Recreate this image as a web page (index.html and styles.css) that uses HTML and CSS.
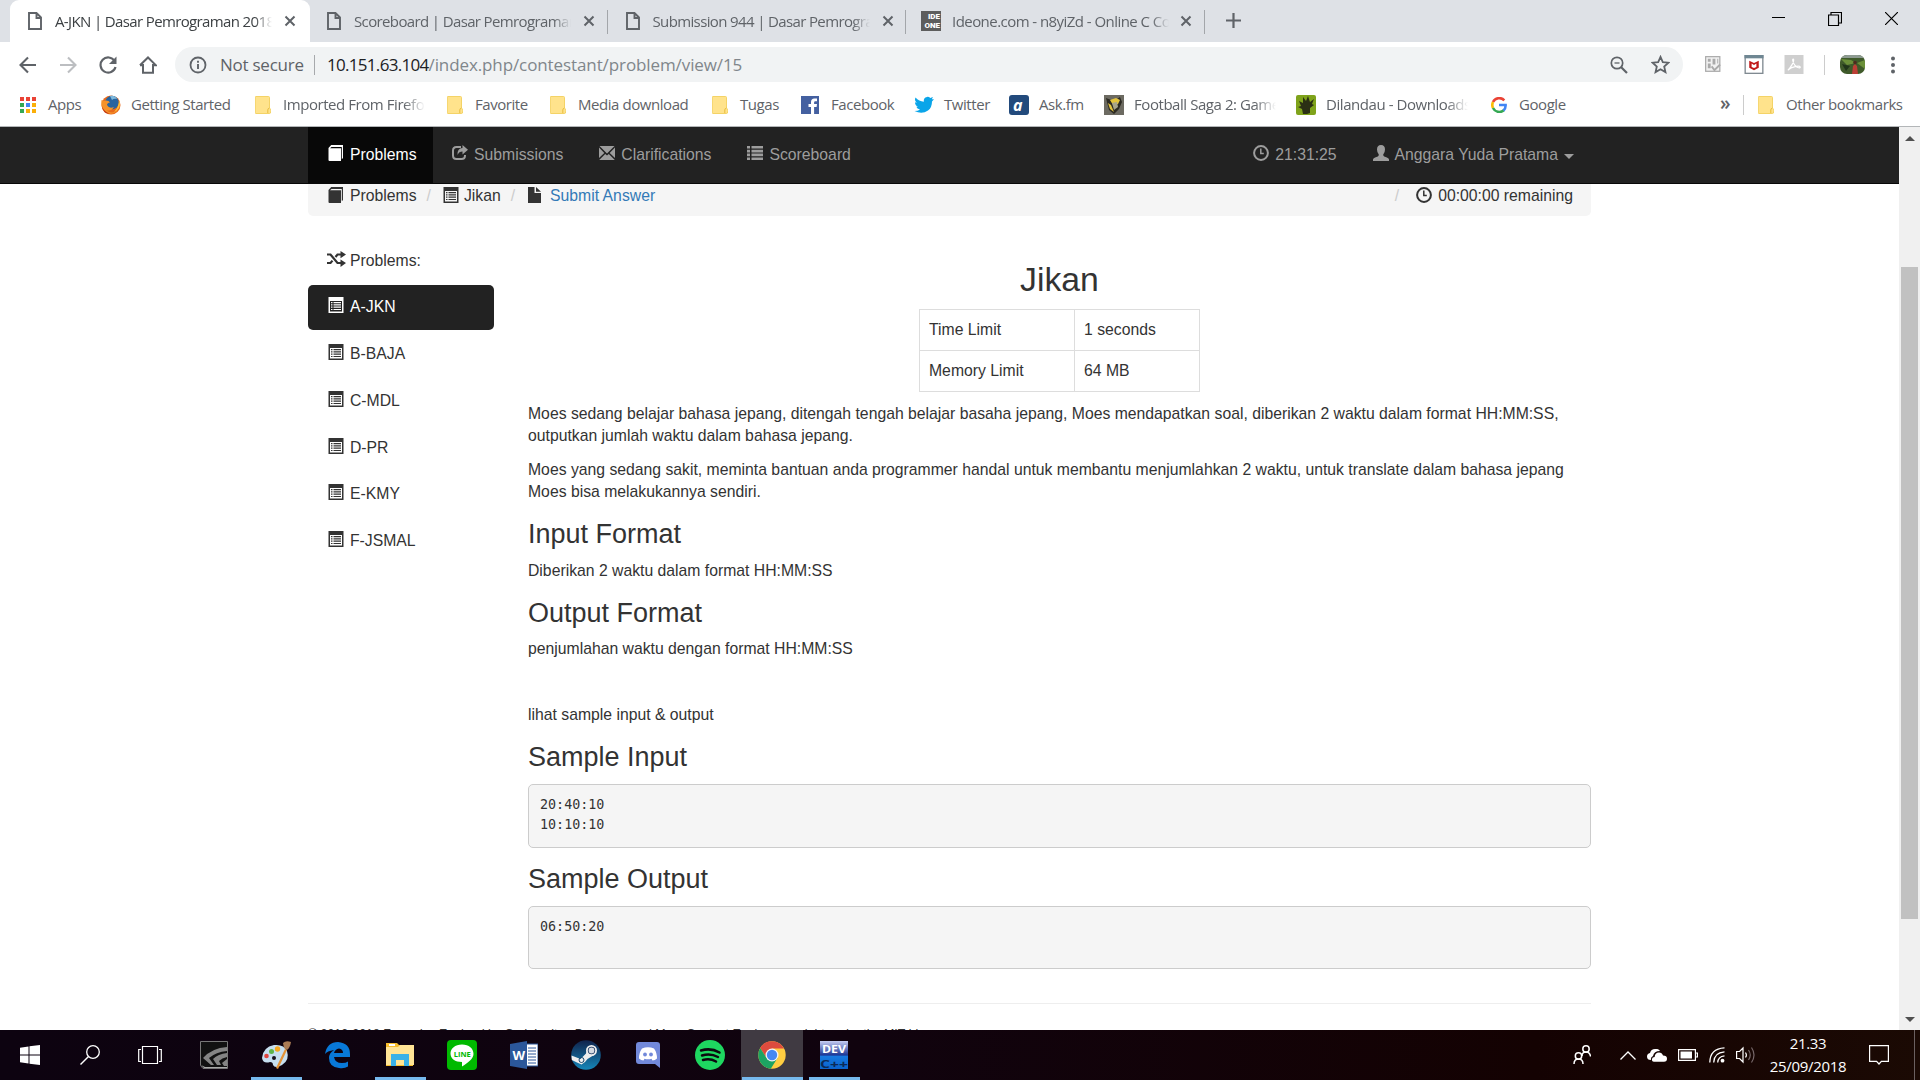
FILE: index.html
```html
<!DOCTYPE html>
<html lang="id">
<head>
<meta charset="utf-8">
<title>A-JKN | Dasar Pemrograman 2018</title>
<link rel="stylesheet" href="styles.css">
</head>
<body>
<svg class="defs" aria-hidden="true">
  <symbol id="page" viewBox="0 0 14 18"><path d="M1 1h7.5L13 5.5V17H1zM8.5 1v5H13" fill="none" stroke="currentColor" stroke-width="1.9"/></symbol>
  <symbol id="x" viewBox="0 0 12 12"><path d="M1.5 1.5l9 9M10.5 1.5l-9 9" stroke="currentColor" stroke-width="2" fill="none"/></symbol>
  <symbol id="folder" viewBox="0 0 16 18"><path d="M1 .5h12.5q1 0 1 1V12q1.200 1 1.200 2.500V16q0 1.500-1.500 1.500H1q-.7 0-.7-.7V1.200Q.3.500 1 .500z" fill="#ffe38c" stroke="#f3cf5b" stroke-width=".9"/><path d="M12.800 17v-3q0-1.500 1.500-2" fill="none" stroke="#e8bd3d"/></symbol>
  <symbol id="book" viewBox="0 0 16 16"><path d="M3.200 0H15v13l-1.200 1.200V2H3.500L2 3.200h11V16H1.500Q.5 16 .5 15V3z" fill="currentColor"/></symbol>
  <symbol id="list-alt" viewBox="0 0 16 16"><path d="M.5 0h15v16H.5zM2 4v10.500h12V4z" fill="currentColor" fill-rule="evenodd"/><path d="M3 5h1.500v1.200H3zM5.500 5H13v1.200H5.500zM3 7.300h1.500v1.200H3zM5.500 7.300H13v1.200H5.500zM3 9.600h1.500v1.200H3zM5.500 9.600H13v1.200H5.500zM3 11.900h1.500v1.200H3zM5.500 11.900H13v1.200H5.500z" fill="currentColor"/></symbol>
  <symbol id="share" viewBox="0 0 16 16"><path d="M9 2H4.500Q1 2 1 5.500v5Q1 14 4.500 14h5q3.500 0 3.500-3.500V10" fill="none" stroke="currentColor" stroke-width="2"/><path d="M10.500 0L16 4.800l-5.500 4.700V6.600Q7 6.600 5.500 10 5 3.400 10.500 3z" fill="currentColor"/></symbol>
  <symbol id="mail" viewBox="0 0 16 14"><path d="M.5 0h15L8 7.500zM0 1.500L5.300 7 0 12zM16 1.500L10.700 7 16 12zM6.200 8L8 9.600 9.800 8l6 6H.2z" fill="currentColor"/></symbol>
  <symbol id="list" viewBox="0 0 16 16"><path d="M0 1h3v2.600H0zM4.500 1H16v2.600H4.500zM0 4.800h3v2.600H0zM4.500 4.800H16v2.600H4.500zM0 8.600h3v2.600H0zM4.500 8.600H16v2.600H4.500zM0 12.400h3V15H0zM4.500 12.400H16V15H4.500z" fill="currentColor"/></symbol>
  <symbol id="clock" viewBox="0 0 16 16"><circle cx="8" cy="8" r="6.900" fill="none" stroke="currentColor" stroke-width="2"/><path d="M7.800 3.500v5h3" fill="none" stroke="currentColor" stroke-width="1.500"/></symbol>
  <symbol id="user" viewBox="0 0 16 16"><path d="M8 0q4 0 4 4.500 0 3-1.800 5 0 1.500 1 2Q16 13 16 14.500V16H0v-1.500Q0 13 4.800 11.500q1-.5 1-2Q4 7.500 4 4.500 4 0 8 0z" fill="currentColor"/></symbol>
  <symbol id="file" viewBox="0 0 13 16"><path d="M0 0h6.500v6H13v10H0zM8 0l5 4.700H8z" fill="currentColor"/></symbol>
  <symbol id="random" viewBox="0 0 19 16"><path d="M0 3.500h3.500l7 8.500H14M0 12h3.500l2-2.400M8.500 6l2-2.500H14" fill="none" stroke="currentColor" stroke-width="2.200"/><path d="M13.500 0L19 3.500l-5.500 3.700zM13.500 8.500L19 12l-5.500 4z" fill="currentColor"/></symbol>
</svg>

<header class="chrome">
  <div class="tabs">
    <div class="tab active"><svg class="pg"><use href="#page"/></svg><span class="t">A-JKN | Dasar Pemrograman 2018</span><svg class="cl"><use href="#x"/></svg></div>
    <div class="tab"><svg class="pg"><use href="#page"/></svg><span class="t">Scoreboard | Dasar Pemrograman</span><svg class="cl"><use href="#x"/></svg></div>
    <div class="tab"><svg class="pg"><use href="#page"/></svg><span class="t">Submission 944 | Dasar Pemrograman</span><svg class="cl"><use href="#x"/></svg></div>
    <div class="tab ide"><span class="ideicon"><b>IDE</b><b>ONE</b></span><span class="t">Ideone.com - n8yiZd - Online C Compiler</span><svg class="cl"><use href="#x"/></svg></div>
    <svg class="plus" viewBox="0 0 15 15"><path d="M7.500 0v15M0 7.500h15" stroke="#5f6368" stroke-width="2.200"/></svg>
    <div class="wins">
      <svg width="13" height="13" viewBox="0 0 13 13"><path d="M0 5.500h13" stroke="#000"/></svg>
      <svg width="14" height="14" viewBox="0 0 14 14"><path d="M.5 3h10v10.500H.5zM3 3V.5h10.500v10.500H11" stroke="#000" fill="none" stroke-width="1.200"/></svg>
      <svg width="13" height="13" viewBox="0 0 13 13"><path d="M0 0l13 13M13 0L0 13" stroke="#000" stroke-width="1.200"/></svg>
    </div>
  </div>

  <div class="toolbar">
    <svg class="nav n1" viewBox="0 0 18 18"><path d="M17 9H2M9 1.500L1.500 9 9 16.500" fill="none" stroke="#5f6368" stroke-width="2.100"/></svg>
    <svg class="nav n2" viewBox="0 0 18 18"><path d="M1 9h15M9 1.500L16.500 9 9 16.500" fill="none" stroke="#bcbec1" stroke-width="2.100"/></svg>
    <svg class="nav n3" viewBox="0 0 18 18"><path d="M15.600 5A7.600 7.600 0 1 0 16.500 11" fill="none" stroke="#5f6368" stroke-width="2.200"/><path d="M17.500.5V8H10z" fill="#5f6368"/></svg>
    <svg class="nav n4" viewBox="0 0 18 18"><path d="M4 8v8.800h10V8M1 9.300L9 1.500l8 7.800H14.500M1 9.300h2.500" fill="none" stroke="#5f6368" stroke-width="2"/></svg>
    <div class="omni">
      <svg class="info" viewBox="0 0 18 18"><circle cx="9" cy="9" r="7.500" fill="none" stroke="#5f6368" stroke-width="1.800"/><path d="M9 8v5M9 4.800v1.900" stroke="#5f6368" stroke-width="1.900"/></svg>
      <span class="ns">Not secure</span><i class="bar"></i>
      <span class="url"><b>10.151.63.104</b>/index.php/contestant/problem/view/15</span>
      <svg class="mag" viewBox="0 0 18 18"><circle cx="7" cy="7" r="5.700" fill="none" stroke="#5f6368" stroke-width="1.700"/><path d="M11 11l6 6" stroke="#5f6368" stroke-width="2.200"/><path d="M4.500 7h5" stroke="#5f6368" stroke-width="1.300"/></svg>
      <svg class="star" viewBox="0 0 18 18"><path d="M9 1.800l2.200 4.900 5.300.6-4 3.600 1.200 5.300L9 13.500l-4.700 2.700 1.200-5.300-4-3.600 5.300-.6z" fill="none" stroke="#5f6368" stroke-width="1.700"/></svg>
    </div>
    <svg class="ext e1" viewBox="0 0 18 18"><rect x=".7" y=".7" width="15" height="15.500" fill="#f1f1f1" stroke="#aaa" stroke-width="1.300"/><path d="M3 3h3v3H3zM3 8h3v5H3zM8 3h3v6H8zM13 3h1v5h-1z" fill="#aaa"/><path d="M7 11l3 4 6-6" fill="none" stroke="#aaa" stroke-width="2"/></svg>
    <svg class="ext e2" viewBox="0 0 20 20"><rect x=".7" y=".7" width="18.600" height="18.600" fill="#fff" stroke="#808a91" stroke-width="1.400"/><path d="M0 0h20v3.500H0z" fill="#6f8793"/><path d="M5 6l5 2.500L15 6v7.500L10 16l-5-2.500zM7.500 9v3.500l2.500 1.300 2.500-1.300V9L10 10.500z" fill="#c01818" fill-rule="evenodd"/></svg>
    <svg class="ext e3" viewBox="0 0 20 20"><path d="M0 0h20v20H0z" fill="#cfcfcf"/><path d="M3.500 16C6 14 10.500 7 9.500 4.500 8 3 8.500 8 11 11s6 3 5.500 1.500S7 12 4 15.500" fill="none" stroke="#fff" stroke-width="1.300"/></svg>
    <i class="bar2"></i>
    <svg class="ava" viewBox="0 0 25 19"><defs><clipPath id="av"><rect width="25" height="19" rx="7"/></clipPath></defs><g clip-path="url(#av)"><path d="M0 0h25v19H0z" fill="#3f5a2a"/><path d="M0 0h25v3H0z" fill="#8e9b92"/><path d="M1 4l10 1 5 3-9 2zM17 8l8-3v9z" fill="#6b9039"/><path d="M2 9l8 2-4 5z" fill="#20351a"/><path d="M12 19l1-8 2-2 2 2 1 8z" fill="#bc3f36"/><circle cx="15" cy="7.500" r="1.800" fill="#4c2d20"/></g></svg>
    <svg class="dots" viewBox="0 0 4 18"><g fill="#5f6368"><circle cx="2" cy="2.500" r="2"/><circle cx="2" cy="9" r="2"/><circle cx="2" cy="15.500" r="2"/></g></svg>
  </div>

  <div class="marks">
    <a class="m" style="width:81px"><svg viewBox="0 0 16 16" class="apps"><path d="M0 0h4v4H0zM6 0h4v4H6zM12 0h4v4h-4z" fill="#ea4335"/><path d="M0 6h4v4H0zM0 12h4v4H0z" fill="#34a853"/><path d="M6 6h4v4H6z" fill="#4285f4"/><path d="M12 6h4v4h-4zM6 12h4v4H6zM12 12h4v4h-4z" fill="#fbaf08"/></svg><span>Apps</span></a>
    <a class="m w" style="width:154px"><svg viewBox="0 0 20 20"><circle cx="10" cy="10" r="9.500" fill="#e8691b"/><circle cx="11" cy="7.500" r="6.800" fill="#27649f"/><path d="M9 1q5-1 7 3-3-1-5 1z" fill="#7db8dc"/><path d="M.6 5Q3 6 5 5.500q3 0 4 2-3 .5-3 2.500 2 4 7 2-3 5-8 3 6 5 12 0Q12 21 5 17.500-1 13 .6 5z" fill="#f5932a"/><path d="M18 5q2 4 0 8-2 3-5 4 5-5 5-12z" fill="#fbc13a"/><path d="M1 11q2 6 8 7.500-7 1-8-7.500z" fill="#c23a16"/></svg><span>Getting Started</span></a>
    <a class="m" style="width:192px"><svg><use href="#folder"/></svg><span class="fade">Imported From Firefox</span></a>
    <a class="m" style="width:103px"><svg><use href="#folder"/></svg><span>Favorite</span></a>
    <a class="m" style="width:162px"><svg><use href="#folder"/></svg><span>Media download</span></a>
    <a class="m" style="width:89px"><svg><use href="#folder"/></svg><span>Tugas</span></a>
    <a class="m w" style="width:113px"><svg viewBox="0 0 20 20"><path d="M0 1h18v18H0z" fill="#4460a0"/><path d="M10 19v-7H7.500V9H10V7q0-3.500 3.500-3.500H16v2.800h-1.700q-1.200 0-1.200 1.200V9H16l-.4 3h-2.500v7z" fill="#fff"/></svg><span>Facebook</span></a>
    <a class="m w" style="width:95px"><svg viewBox="0 0 20 20"><path d="M20 4.200l-2 2.200q0 6-4 9.200-6 4.200-13.500.5 3.500 0 5.500-1.600-3-.5-3.700-2.800h1.700Q1 10.500 1 7.300l1.800.5Q0 5.400 1.500 2.500q3.500 4 8.300 4.200Q9.300 2.500 13 1.900q2-.2 3.300 1.100L19 2l-1.200 2.300z" fill="#0aa5e9"/></svg><span>Twitter</span></a>
    <a class="m w" style="width:95px"><svg viewBox="0 0 20 20"><rect width="20" height="20" rx="3" fill="#224a7c"/><text x="4" y="16" class="ask">a</text></svg><span>Ask.fm</span></a>
    <a class="m w" style="width:192px"><svg viewBox="0 0 20 20"><path d="M0 0h20v20H0z" fill="#6c6a61"/><path d="M2 3l8 3 6-4 2 5-3 7-5 5-5-4z" fill="#2c2a22"/><path d="M6 5l6-2 4 2-2 4-5 1zM4 8l2 6 4 3-3-7z" fill="#e4c43c"/><path d="M8 8l5-1 1 5-4 3z" fill="#a8a48a"/></svg><span class="fade">Football Saga 2: Game</span></a>
    <a class="m w" style="width:195px"><svg viewBox="0 0 20 20"><rect width="20" height="20" rx="2" fill="#7fa31b"/><path d="M3 6l4 2V2l3 4 2-5 2 6 4-3-2 5 2 1-4 3v5l-3 1H7l-1-5-4-2 3-1z" fill="#2b3014"/></svg><span class="fade">Dilandau - Downloads</span></a>
    <a class="m" style="width:229px"><svg viewBox="0 0 16 16" class="apps"><path d="M13.300 3.300A7 7 0 0 0 2 5" fill="none" stroke="#ea4335" stroke-width="2.600"/><path d="M2 5a7 7 0 0 0 0 6" fill="none" stroke="#fbbc05" stroke-width="2.600"/><path d="M2 11a7 7 0 0 0 10.800 2.300" fill="none" stroke="#34a853" stroke-width="2.600"/><path d="M12.500 13.500A7 7 0 0 0 14.600 8H8" fill="none" stroke="#4285f4" stroke-width="2.600"/></svg><span>Google</span></a>
    <span class="more">»</span><i class="bar3"></i>
    <a class="m"><svg><use href="#folder"/></svg><span>Other bookmarks</span></a>
  </div>
</header>

<main class="view">
  <div class="site">
    <nav class="navbar">
      <div class="box">
        <a class="on"><svg><use href="#book"/></svg>Problems</a>
        <a><svg><use href="#share"/></svg>Submissions</a>
        <a><svg><use href="#mail"/></svg>Clarifications</a>
        <a><svg><use href="#list"/></svg>Scoreboard</a>
        <a class="right"><svg><use href="#clock"/></svg>21:31:25</a>
        <a class="user"><svg><use href="#user"/></svg>Anggara Yuda Pratama<i class="caret"></i></a>
      </div>
    </nav>
    <div class="box crumbs">
      <span class="c1"><svg><use href="#book"/></svg>Problems</span><i>/</i>
      <span class="c2"><svg><use href="#list-alt"/></svg>Jikan</span><i>/</i>
      <a class="c3"><svg><use href="#file"/></svg>Submit Answer</a>
      <i class="right">/</i><span class="c4"><svg><use href="#clock"/></svg>00:00:00 remaining</span>
    </div>
    <div class="box cols">
      <ul class="side">
        <li class="head"><svg><use href="#random"/></svg>Problems:</li>
        <li class="sel"><svg><use href="#list-alt"/></svg>A-JKN</li>
        <li><svg><use href="#list-alt"/></svg>B-BAJA</li>
        <li><svg><use href="#list-alt"/></svg>C-MDL</li>
        <li><svg><use href="#list-alt"/></svg>D-PR</li>
        <li><svg><use href="#list-alt"/></svg>E-KMY</li>
        <li><svg><use href="#list-alt"/></svg>F-JSMAL</li>
      </ul>
      <article>
        <h2>Jikan</h2>
        <table><tr><td class="k">Time Limit</td><td>1 seconds</td></tr><tr><td class="k">Memory Limit</td><td>64 MB</td></tr></table>
        <p>Moes sedang belajar bahasa jepang, ditengah tengah belajar basaha jepang, Moes mendapatkan soal, diberikan 2 waktu dalam format HH:MM:SS,<br>outputkan jumlah waktu dalam bahasa jepang.</p>
        <p>Moes yang sedang sakit, meminta bantuan anda programmer handal untuk membantu menjumlahkan 2 waktu, untuk translate dalam bahasa jepang<br>Moes bisa melakukannya sendiri.</p>
        <h3>Input Format</h3>
        <p>Diberikan 2 waktu dalam format HH:MM:SS</p>
        <h3 class="out">Output Format</h3>
        <p>penjumlahan waktu dengan format HH:MM:SS</p>
        <p class="blank">&nbsp;</p>
        <p>lihat sample input &amp; output</p>
        <h3>Sample Input</h3>
        <pre>20:40:10
10:10:10</pre>
        <h3>Sample Output</h3>
        <pre>06:50:20</pre>
      </article>
    </div>
    <footer class="box">© 2013-2018 Forendev Engined by CodeIgniter, Bootstrap and MonoContest Engine copyright under the MIT License</footer>
  </div>
  <div class="scroll"><i class="up"></i><i class="thumb"></i><i class="down"></i></div>
</main>

<div class="task">
  <div class="k0"><svg width="20" height="20" viewBox="0 0 20 20"><path d="M0 2.700L8.500 1.500V9.500H0zM9.500 1.300L20 0v9.500H9.500zM0 10.500h8.500v8L0 17.300zM9.500 10.500H20V20L9.500 18.700z" fill="#fff"/></svg></div>
  <div class="k0"><svg width="20" height="20" viewBox="0 0 20 20"><circle cx="13" cy="7" r="6.300" fill="none" stroke="#fff" stroke-width="1.300"/><path d="M8.500 11.500L.5 19.500" stroke="#fff" stroke-width="1.400"/></svg></div>
  <div class="k0"><svg width="24" height="20" viewBox="0 0 24 20"><path d="M4.500 1.500h15v17h-15zM3 4.500H.7v12H3M21 4.500h2.300v12H21" fill="none" stroke="#fff" stroke-width="1.200"/></svg></div>
  <div class="k1"><svg width="28" height="28" viewBox="0 0 28 28"><path d="M.5.5h27v27H3l-2.500-3z" fill="#111" stroke="#777"/><path d="M1 24l3 3h23v-1H5z" fill="#aaa"/><path d="M3 17Q12 7 27 6v4Q16 11 9 17l5 7h-3zM13 18q5-5 14-6v4q-5 1-8 4l2 4h-4zM22 22l5-4v7h-3z" fill="#848484"/></svg></div>
  <div class="k1 run"><svg width="30" height="28" viewBox="0 0 30 28"><path d="M1 17Q2 6 13 4q10-1 13 6 3 9-5 14-7 4-9 0 0-3-3-3-7 2-8-4z" fill="#c7dff0"/><circle cx="5.500" cy="15" r="2.300" fill="#e0463e"/><circle cx="10.500" cy="10.500" r="2.500" fill="#5fb54a"/><circle cx="16.500" cy="8" r="2.700" fill="#f6a821"/><circle cx="13" cy="17" r="2" fill="#17101c"/><path d="M24 8l2 1-9 19-2-1z" fill="#e39236"/><path d="M22 2q3-3 8-1-1 6-4 8l-3-2z" fill="#ab7c55"/></svg></div>
  <div class="k1"><svg width="26" height="28" viewBox="0 0 26 28"><path d="M0 13Q2 1 13 1q12 1 12 12v3H9q1 6 8 6 4 0 6-1.500v5Q19 28 14 27 4 26 4 17q0-5 5-8-7 1-9 4zM9 12h9q0-4-4-4.500Q10 8 9 12z" fill="#0879d8"/></svg></div>
  <div class="k1 run"><svg width="28" height="26" viewBox="0 0 28 26"><path d="M0 1h11l2 2h14v21H0z" fill="#f7bd2c"/><path d="M0 5h12l2-2h14v20H0z" fill="#ffe495"/><path d="M3 2h6v2H3z" fill="#fff"/><path d="M5 24V12h18v12h-5v-6h-8v6z" fill="#39b1e8"/></svg></div>
  <div class="k1"><svg width="30" height="30" viewBox="0 0 30 30"><rect width="30" height="30" rx="4" fill="#00b900"/><path d="M15 4.500c7 0 11.500 4 11.500 9.500 0 5-6 9-11.500 12.500V22C8 22 3.500 18.500 3.500 13.500S8 4.500 15 4.500z" fill="#fff"/><text x="6.800" y="16.500" class="line">LINE</text></svg></div>
  <div class="k1"><svg width="28" height="28" viewBox="0 0 28 28"><path d="M16 3h12v22H16z" fill="#fff" stroke="#2b579a"/><path d="M18 7h8M18 10h8M18 13h8M18 16h8M18 19h8M18 22h8" stroke="#2b579a"/><path d="M0 3l17-3v28L0 25z" fill="#2b579a"/><text x="2.500" y="18.500" class="word">W</text></svg></div>
  <div class="k1"><svg width="30" height="30" viewBox="0 0 30 30"><defs><linearGradient id="sg" x2="0" y2="1"><stop offset="0" stop-color="#10224b"/><stop offset="1" stop-color="#1687b9"/></linearGradient></defs><circle cx="15" cy="15" r="14.800" fill="url(#sg)"/><path d="M.5 15.500l9 3.500 5.500-5.500 1-3.500 7 5-6.500 4-2.500 3-3.500 2.500-4.500-2L.8 20z" fill="#eee"/><circle cx="20.500" cy="10.500" r="4.600" fill="#17335d" stroke="#eee" stroke-width="1.800"/><circle cx="20.500" cy="10.500" r="2.900" fill="#d6dbe2"/><circle cx="10.500" cy="20" r="2.500" fill="none" stroke="#17476d"/></svg></div>
  <div class="k1"><svg width="24" height="26" viewBox="0 0 24 26"><path d="M3 0h18q3 0 3 3v23l-5-4H3q-3 0-3-3V3q0-3 3-3z" fill="#7289da"/><path d="M6 6.500q6-2.500 12 0 3 4 3 10-2 2-4.500 2l-1-1.700q-3.500 1-7 0l-1 1.700Q5 18.500 3 16.500q0-6 3-10z" fill="#fff"/><circle cx="9" cy="12.500" r="1.900" fill="#7289da"/><circle cx="15" cy="12.500" r="1.900" fill="#7289da"/></svg></div>
  <div class="k1"><svg width="30" height="30" viewBox="0 0 30 30"><circle cx="15" cy="15" r="15" fill="#1ed760"/><path d="M6 10.500q10-3 18.500 2M7 15.500q8.500-2.500 16 1.500M8 20q7-2 13 1.500" fill="none" stroke="#0c0910" stroke-width="2.500" stroke-linecap="round"/></svg></div>
  <div class="k1 cur"><svg width="28" height="28" viewBox="0 0 28 28"><circle cx="14" cy="14" r="13.700" fill="#ffcd41"/><path d="M2.200 7A13.700 13.700 0 0 1 26 7.500H14L8.500 17z" fill="#dd4b3e"/><path d="M2.200 7A13.700 13.700 0 0 0 12.800 27.700L19.500 17 8.500 17z" fill="#1da362"/><circle cx="14" cy="14" r="6.500" fill="#f4f4f4"/><circle cx="14" cy="14" r="5.200" fill="#4688f1"/></svg></div>
  <div class="k1 run"><svg width="28" height="28" viewBox="0 0 28 28"><defs><linearGradient id="dg" x2="0" y2="1"><stop offset="0" stop-color="#c6cdf2"/><stop offset=".5" stop-color="#1c3795"/><stop offset=".55" stop-color="#1679e0"/><stop offset="1" stop-color="#0b63cc"/></linearGradient></defs><path d="M0 0h28v28H0z" fill="url(#dg)"/><text x="2" y="11.500" class="dev" textLength="24" lengthAdjust="spacingAndGlyphs">DEV</text><text x="0" y="26.500" class="cpp" textLength="28" lengthAdjust="spacingAndGlyphs">C++</text></svg></div>
  <div class="tray">
    <svg width="18" height="20" viewBox="0 0 18 20"><g fill="none" stroke="#fff" stroke-width="1.500"><circle cx="13" cy="4" r="3.200"/><circle cx="5.500" cy="11" r="3.200"/><path d="M9 11q0-4 4-4 4 0 4.500 4.500M1 19q0-5 4.500-5t4.500 5"/></g></svg>
    <svg width="16" height="9" viewBox="0 0 16 9"><path d="M.5 8.500L8 1l7.500 7.500" fill="none" stroke="#fff" stroke-width="1.300"/></svg>
    <svg width="20" height="13" viewBox="0 0 20 13"><path d="M4 11Q0 11 0 7.500 0 4.500 3 4 4 0 8 0q4-.5 5 2-6 0-7 5-2.500 1-2 4z" fill="#fff"/><path d="M7 12.700Q4.500 12.500 5 10q.3-2 2.600-2Q8 3.500 12 3.500q3 0 4 3 4 0 4 3.200 0 3-3 3z" fill="#fff"/></svg>
    <svg width="20" height="12" viewBox="0 0 20 12"><path d="M.6.6h16.800v10.800H.6zM18 4h1.400v4H18" fill="none" stroke="#fff" stroke-width="1.200"/><path d="M2.500 2.500h11.500v7H2.500z" fill="#fff"/></svg>
    <svg width="16" height="16" viewBox="0 0 16 16"><g fill="none" stroke="#fff" stroke-width="1.300"><path d="M.8 15.500Q1 1.500 15.500.8M4.700 15.500Q5 5.500 15.500 4.800M8.700 15.500Q9 9.500 15.500 8.800"/></g><circle cx="13.500" cy="13.700" r="1.900" fill="#fff"/></svg>
    <svg width="20" height="18" viewBox="0 0 20 18"><path d="M.6 5.500h3L7 2v14l-3.400-3.500h-3z" fill="none" stroke="#fff" stroke-width="1.200"/><path d="M9.500 6.500q1.800 2.500 0 5" fill="none" stroke="#fff" stroke-width="1.200"/><path d="M12.500 4q3.500 5 0 10M15.500 1.500q5 7.500 0 15" fill="none" stroke="#77686a" stroke-width="1.200"/></svg>
  </div>
  <div class="time"><span>21.33</span><span>25/09/2018</span></div>
  <svg class="note" width="20" height="20" viewBox="0 0 20 20"><path d="M.6.6h18.800v15.800h-7L10 19l-2.400-2.600h-7z" fill="none" stroke="#fff" stroke-width="1.200"/></svg>
  <i class="desk"></i>
</div>
</body>
</html>
```
FILE: styles.css
```css
* { box-sizing: border-box; }
body { margin: 0; width: 1920px; height: 1080px; overflow: hidden; display: flex; flex-direction: column; font-family: "Liberation Sans", Arial, sans-serif; background: #fff; }
.defs { position: absolute; width: 0; height: 0; }
svg, i { flex: none; display: block; }

/* browser frame */
.chrome { height: 127px; border-bottom: 1px solid #b3b6b8; font-family: "Open Sans", sans-serif; color: #5f6368; white-space: nowrap; flex: none; }
.tabs { height: 42px; background: #dee1e6; display: flex; padding-left: 10px; }
.tab { width: 298.500px; height: 42px; display: flex; align-items: center; padding: 0 0 1px 18px; flex: none; font-size: 15px; letter-spacing: -.63px; background: linear-gradient(#a3a6aa, #a3a6aa) right 0 top 10px / 1px 24px no-repeat; }
.tab.active { width: 300px; background: #fff; border-radius: 9px 9px 0 0; color: #3c4043; margin-right: -1px; }
.tab .pg { width: 14px; height: 18px; color: #5f6368; margin-right: 13px; }
.tab .t { width: 217px; overflow: hidden; -webkit-mask-image: linear-gradient(90deg, #000 92%, transparent); mask-image: linear-gradient(90deg, #000 92%, transparent); }
.tab .cl { width: 12px; height: 12px; margin-left: 12px; color: #5f6368; }
.tab.ide { padding-left: 15px; width: 299px; letter-spacing: -.55px; }
.ide .cl { margin-left: 11px; }
.ideicon { width: 20px; height: 20px; background: #5d5d5d; color: #fff; font: bold 8px/9px Roboto, sans-serif; margin-right: 11px; padding: 1px; display: flex; flex-direction: column; align-items: flex-end; letter-spacing: 0; }
.plus { width: 15px; height: 15px; margin: 13px 0 0 21px; }
.wins { margin-left: auto; display: flex; gap: 43px; padding: 12px 22px 0 0; }
.toolbar { height: 44px; display: flex; align-items: center; padding: 1px 0 0 19px; }
.nav { width: 18px; height: 18px; margin-right: 22px; }
.n4 { margin-right: 18px; }
.omni { width: 1508px; height: 35px; border-radius: 18px; background: #f1f3f4; display: flex; align-items: center; padding-left: 14px; font-size: 17px; }
.info { width: 18px; height: 18px; margin-right: 13px; }
.ns { width: 94px; letter-spacing: -.25px; }
.bar { width: 1px; height: 20px; background: #a7a9ac; margin-right: 12px; }
.url { letter-spacing: -.1px; color: #80868b; }
.url b { font-weight: 400; color: #202124; letter-spacing: -.7px; }
.mag { width: 18px; height: 18px; margin-left: auto; }
.star { width: 19px; height: 19px; margin: 0 13px 0 23px; }
.ext { width: 20px; height: 19px; }
.e1 { width: 17px; margin-left: 22px; } .e2 { margin-left: 22px; } .e3 { margin-left: 20px; }
.bar2 { width: 1px; height: 20px; background: #ccc; margin: 0 15px 0 20px; }
.ava { width: 25px; height: 19px; } .dots { width: 4px; height: 18px; margin-left: 26px; }
.marks { height: 38px; display: flex; align-items: center; padding-left: 20px; font-size: 15px; letter-spacing: -.44px; }
.m { display: flex; align-items: center; flex: none; }
.m span { margin-top: -2px; }
.m svg { width: 16px; height: 18px; margin-right: 12px; }
.m.w svg { width: 20px; height: 20px; margin-right: 10px; }
.m .apps { height: 16px; }
.fade { width: 142px; overflow: hidden; -webkit-mask-image: linear-gradient(90deg, #000 85%, transparent); mask-image: linear-gradient(90deg, #000 85%, transparent); }
.ask { font: italic bold 16px "Open Sans", sans-serif; fill: #fff; }
.more { width: 23px; font-size: 19px; font-weight: 600; margin-top: -4px; }
.bar3 { width: 1px; height: 20px; background: #ccc; margin-right: 14px; }

/* page */
.view { height: 903px; display: flex; flex: none; overflow: hidden; }
.site { width: 1899px; font-size: 15.75px; line-height: 22px; color: #333; white-space: nowrap; overflow: hidden; }
.site svg { width: 16px; height: 16px; }
.box { width: 1283px; margin-left: 308px; }
.navbar { height: 57px; background: #222; border-bottom: 1px solid #080808; color: #9d9d9d; }
.navbar .box { display: flex; height: 56px; }
.navbar a { display: flex; align-items: center; padding: 0 17px 1px 19px; }
.navbar svg { margin: -3px 6px 0 0; }
.navbar .on { width: 125px; padding-left: 20px; background: #080808; color: #fff; }
.navbar .right { margin-left: auto; }
.caret { border: 5px solid transparent; border-top-color: #9d9d9d; border-bottom: 0; margin: 4px 0 0 6px; }
.crumbs { height: 32px; background: #f5f5f5; border-radius: 0 0 5px 5px; display: flex; padding: 1px 18px 0 20px; line-height: 21px; }
.crumbs span, .crumbs a { display: flex; }
.crumbs svg { margin: 2px 6px 0 0; }
.crumbs i { font-style: normal; color: #ccc; margin: 0 12px 0 10px; }
.crumbs .c2 svg { margin-right: 5px; }
.crumbs .c3 { color: #337ab7; margin-left: 1px; }
.crumbs .c3 svg { width: 13px; margin-right: 9px; color: #333; }
.crumbs .right { margin: 0 17px 0 auto; }
.cols { display: flex; padding-top: 22px; height: 788px; border-bottom: 1px solid #eee; }
.side { list-style: none; margin: 0; padding: 0; width: 186px; margin-right: 34px; }
.side li { height: 45px; margin-bottom: 1.900px; padding: 11px 0 0 20px; display: flex; }
.side .head { padding-top: 12px; }
.side svg { margin: 1px 6px 0 0; }
.side .head svg { width: 19px; margin: 1px 4px 0 -1px; }
.side .sel { background: #222; color: #fff; border-radius: 5px; }
article { width: 1063px; }
h2, h3 { font-weight: 400; margin: 0; }
h2 { font-size: 33.750px; line-height: 37px; text-align: center; margin: 23px 0 11px; }
h3 { font-size: 27px; line-height: 29px; margin: 17px 0 11.250px; }
.out { margin-bottom: 10px; }
p { margin: 0 0 12px; }
.blank { line-height: 20px; }
table { border-collapse: collapse; margin: 0 auto 11px; width: 281px; }
td { border: 1px solid #ddd; padding: 0 9px; height: 41px; }
td.k { width: 155px; }
pre { margin: 0; height: 63.500px; border: 1px solid #ccc; border-radius: 5px; background: #f5f5f5; padding: 10px 11px; font: 13.360px/20px "DejaVu Sans Mono", monospace; }
h3 + pre { margin-top: 12px; }
footer { font-size: 12.400px; padding-top: 21px; line-height: 18px; }
.scroll { width: 21px; height: 903px; background: #f0f0f0; display: flex; flex-direction: column; align-items: center; }
.up { border: 5px solid transparent; border-bottom-color: #505050; border-top: 0; margin: 9px 0 126px; }
.thumb { width: 17px; height: 652px; background: #c1c1c1; }
.down { border: 5px solid transparent; border-top-color: #505050; border-bottom: 0; margin-top: 98px; }

/* taskbar */
.task { height: 50px; flex: none; background: linear-gradient(90deg, #0d0310, #10030e 45%, #140202 80%, #1b0a04); display: flex; }
.k0 { width: 60px; display: flex; align-items: center; justify-content: center; }
.k1 { width: 62px; display: flex; align-items: center; justify-content: center; background: linear-gradient(#76b9ed, #76b9ed) center bottom / 0 3px no-repeat; }
.k0 + .k1 { margin-left: 3px; }
.run { background-size: 51px 3px; }
.cur { background-size: 61px 3px; background-color: #403a42; }
.line { font: bold 7.500px "Open Sans", sans-serif; fill: #00b900; }
.word { font: bold 13px "Open Sans", sans-serif; fill: #fff; }
.dev { font: bold 11px "Open Sans", sans-serif; fill: #fff; }
.cpp { font: bold 11px "Open Sans", sans-serif; fill: #0b2a57; }
.tray { margin-left: auto; display: flex; align-items: center; gap: 11px; }
.tray svg:first-child { margin-right: 18px; }
.time { width: 100px; color: #fff; font: 15px/23px "Open Sans", sans-serif; letter-spacing: -.3px; display: flex; flex-direction: column; align-items: center; padding-top: 2px; margin-left: 2px; }
.note { margin: 15px 25px 0 11px; }
.desk { width: 1px; height: 50px; background: #6b6060; margin-right: 5px; }
```
